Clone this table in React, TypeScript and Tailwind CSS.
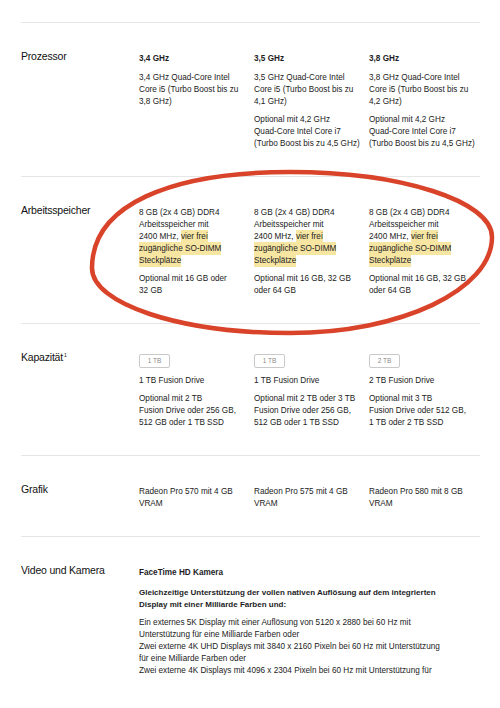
import React from "react";

const F = { fontFamily: '"Liberation Sans", Arial, sans-serif' };

function Lines({ lines, bold, small }: { lines: React.ReactNode[]; bold?: boolean; small?: boolean }) {
  return (
    <div className={(bold ? "font-bold text-[#1d1d1f]" : "text-[#222]") + (small ? " text-[8px]" : "")}>
      {lines.map((l, i) => (
        <div key={i} className="h-[12px] leading-[12px] whitespace-nowrap">
          {l}
        </div>
      ))}
    </div>
  );
}

const HL = ({ children }: { children: React.ReactNode }) => (
  <span className="bg-[#f7e6a2] py-[2px]">{children}</span>
);

function Row({ label, children, sup }: { label: string; children: React.ReactNode; sup?: boolean }) {
  return (
    <div className="border-t border-[#e6e6e6] pt-[30px] pb-[26px] flex">
      <div className="w-[118px] shrink-0 text-[10.5px] tracking-[-0.2px] leading-[12px] text-[#111] -mt-[3px]">
        {label}
        {sup && <span className="text-[5px] relative -top-[4px] ml-[1px]">1</span>}
      </div>
      <div className="flex-1 flex text-[8.2px]">{children}</div>
    </div>
  );
}

function Col({ children }: { children: React.ReactNode }) {
  return <div className="w-[115px] shrink-0 flex flex-col">{children}</div>;
}

const Box = ({ t }: { t: string }) => (
  <div className="w-[31px] h-[14px] border border-[#c9c9c9] rounded-[2px] flex items-center justify-center text-[6.5px] text-[#8a8a8a] mb-[7px]">
    {t}
  </div>
);

export default function App() {
  return (
    <div className="relative w-[500px] h-[708px] bg-white overflow-hidden" style={F}>
      <div className="pt-[22px] pl-[21px] w-[480px]">
        <Row label="Prozessor">
          <Col>
            <Lines bold lines={["3,4 GHz"]} />
            <div className="mt-[7px]">
              <Lines lines={["3,4 GHz Quad-Core Intel", "Core i5 (Turbo Boost bis zu", "3,8 GHz)"]} />
            </div>
          </Col>
          <Col>
            <Lines bold lines={["3,5 GHz"]} />
            <div className="mt-[7px]">
              <Lines lines={["3,5 GHz Quad-Core Intel", "Core i5 (Turbo Boost bis zu", "4,1 GHz)"]} />
            </div>
            <div className="mt-[6px]">
              <Lines lines={["Optional mit 4,2 GHz", "Quad-Core Intel Core i7", "(Turbo Boost bis zu 4,5 GHz)"]} />
            </div>
          </Col>
          <Col>
            <Lines bold lines={["3,8 GHz"]} />
            <div className="mt-[7px]">
              <Lines lines={["3,8 GHz Quad-Core Intel", "Core i5 (Turbo Boost bis zu", "4,2 GHz)"]} />
            </div>
            <div className="mt-[6px]">
              <Lines lines={["Optional mit 4,2 GHz", "Quad-Core Intel Core i7", "(Turbo Boost bis zu 4,5 GHz)"]} />
            </div>
          </Col>
        </Row>

        <Row label="Arbeitsspeicher">
          {[
            ["Optional mit 16 GB oder", "32 GB"],
            ["Optional mit 16 GB, 32 GB", "oder 64 GB"],
            ["Optional mit 16 GB, 32 GB", "oder 64 GB"],
          ].map((opt, i) => (
            <Col key={i}>
              <Lines
                lines={[
                  "8 GB (2x 4 GB) DDR4",
                  "Arbeitsspeicher mit",
                  <>
                    2400 MHz, <HL>vier frei</HL>
                  </>,
                  <HL>zugängliche SO-DIMM</HL>,
                  <HL>Steckplätze</HL>,
                ]}
              />
              <div className="mt-[6px]">
                <Lines lines={opt} />
              </div>
            </Col>
          ))}
        </Row>

        <Row label="Kapazität" sup>
          {[
            ["1 TB", "1 TB Fusion Drive", ["Optional mit 2 TB", "Fusion Drive oder 256 GB,", "512 GB oder 1 TB SSD"]],
            ["1 TB", "1 TB Fusion Drive", ["Optional mit 2 TB oder 3 TB", "Fusion Drive oder 256 GB,", "512 GB oder 1 TB SSD"]],
            ["2 TB", "2 TB Fusion Drive", ["Optional mit 3 TB", "Fusion Drive oder 512 GB,", "1 TB oder 2 TB SSD"]],
          ].map(([b, t, o], i) => (
            <Col key={i}>
              <Box t={b as string} />
              <Lines lines={[t as string]} />
              <div className="mt-[6px]">
                <Lines lines={o as string[]} />
              </div>
            </Col>
          ))}
        </Row>

        <Row label="Grafik">
          <Col>
            <Lines lines={["Radeon Pro 570 mit 4 GB", "VRAM"]} />
          </Col>
          <Col>
            <Lines lines={["Radeon Pro 575 mit 4 GB", "VRAM"]} />
          </Col>
          <Col>
            <Lines lines={["Radeon Pro 580 mit 8 GB", "VRAM"]} />
          </Col>
        </Row>

        <Row label="Video und Kamera">
          <div className="flex flex-col">
            <Lines bold lines={["FaceTime HD Kamera"]} />
            <div className="mt-[8px]">
              <Lines
                bold
                small
                lines={[
                  "Gleichzeitige Unterstützung der vollen nativen Auflösung auf dem integrierten",
                  "Display mit einer Milliarde Farben und:",
                ]}
              />
            </div>
            <div className="mt-[6px]">
              <Lines
                lines={[
                  "Ein externes 5K Display mit einer Auflösung von 5120 x 2880 bei 60 Hz mit",
                  "Unterstützung für eine Milliarde Farben oder",
                  "Zwei externe 4K UHD Displays mit 3840 x 2160 Pixeln bei 60 Hz mit Unterstützung",
                  "für eine Milliarde Farben oder",
                  "Zwei externe 4K Displays mit 4096 x 2304 Pixeln bei 60 Hz mit Unterstützung für",
                ]}
              />
            </div>
          </div>
        </Row>
      </div>

      <svg className="absolute left-0 top-0 pointer-events-none" width="500" height="708" viewBox="0 0 500 708">
        <path
          d="M92 268 C92 205 170 172 290 172 C401 172 492 201 492 237 C492 290 401 333 290 333 C180 333 92 304 92 268 Z"
          fill="none"
          stroke="#d8432a"
          strokeWidth="4.5"
        />
      </svg>
    </div>
  );
}
